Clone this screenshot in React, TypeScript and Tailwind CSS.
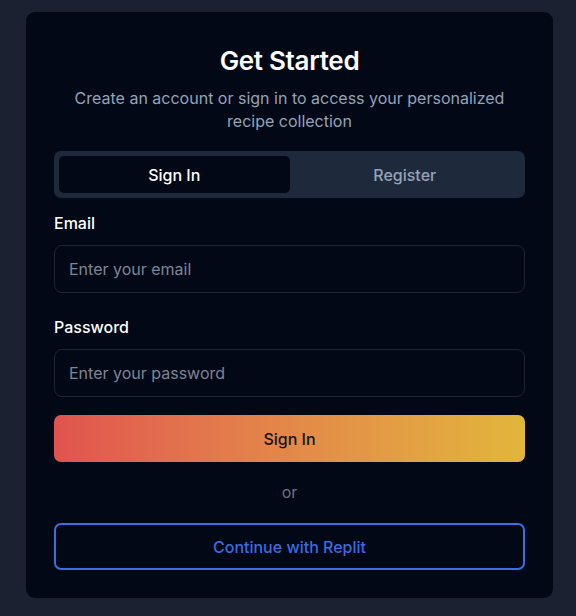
import { useState } from 'react'

export default function App() {
  const [tab, setTab] = useState<'signin' | 'register'>('signin')

  return (
    <div className="min-h-[616px] w-full bg-[#1b2130] px-[26px] pt-[12px] font-['Inter',sans-serif]">
      <div className="w-[527px] rounded-[9px] bg-[#030816] px-[28px] pt-[32px] pb-[28px]">
        <h1 className="text-center text-[26px] leading-[34px] font-semibold tracking-[-0.3px] text-white">Get Started</h1>
        <p className="mt-[9px] text-center text-[16px] leading-[23px] text-[#94a3b8]">
          Create an account or sign in to access your personalized recipe collection
        </p>

        <div className="mt-[18px] grid h-[47px] grid-cols-2 rounded-[7px] bg-[#1e293b] p-[5px]">
          <button
            onClick={() => setTab('signin')}
            className={`rounded-[5px] text-[16px] font-medium ${tab === 'signin' ? 'bg-[#030816] text-white' : 'text-[#94a3b8]'}`}
          >
            Sign In
          </button>
          <button
            onClick={() => setTab('register')}
            className={`rounded-[5px] text-[16px] font-medium ${tab === 'register' ? 'bg-[#030816] text-white' : 'text-[#94a3b8]'}`}
          >
            Register
          </button>
        </div>

        <label className="mt-[14px] block text-[16px] leading-[23px] font-medium text-white">Email</label>
        <input
          type="email"
          placeholder="Enter your email"
          className="mt-[10px] block h-[48px] w-full rounded-[8px] border border-[#1e2532] bg-transparent px-[14px] text-[16px] text-white outline-none placeholder:text-[#7c8595]"
        />

        <label className="mt-[23px] block text-[16px] leading-[23px] font-medium text-white">Password</label>
        <input
          type="password"
          placeholder="Enter your password"
          className="mt-[10px] block h-[48px] w-full rounded-[8px] border border-[#1e2532] bg-transparent px-[14px] text-[16px] text-white outline-none placeholder:text-[#7c8595]"
        />

        <button className="mt-[18px] block h-[47px] w-full rounded-[7px] bg-gradient-to-r from-[#e0534f] to-[#e1b63b] text-[16px] font-medium text-[#111318]">
          Sign In
        </button>

        <p className="mt-[19px] text-center text-[16px] leading-[23px] text-[#6b7280]">or</p>

        <button className="mt-[19px] block h-[47px] w-full rounded-[7px] border-2 border-[#3b6fe0] text-[16px] font-medium text-[#3a6be0]">
          Continue with Replit
        </button>
      </div>
    </div>
  )
}
